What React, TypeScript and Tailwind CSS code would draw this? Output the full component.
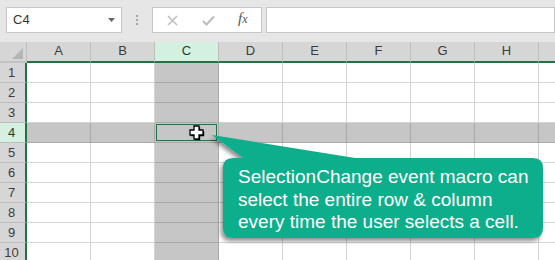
import React from "react";

const COLS = ["A", "B", "C", "D", "E", "F", "G", "H"];
const ROWS = [1, 2, 3, 4, 5, 6, 7, 8, 9, 10];

function Cell({ col, row }: { col: number; row: number }) {
  const selCol = col === 2;
  const selRow = row === 4;
  const active = selCol && selRow;
  if (active) {
    return (
      <div className="w-[64px] h-full shrink-0 border-r border-b border-[#a9a9a9] bg-[#c6c6c6] p-px">
        <div className="w-full h-full border border-[#217346]" />
      </div>
    );
  }
  if (selCol || selRow) {
    return <div className="w-[64px] h-full shrink-0 border-r border-b border-[#a9a9a9] bg-[#c6c6c6]" />;
  }
  return <div className="w-[64px] h-full shrink-0 border-r border-b border-[#d4d4d4] bg-white" />;
}

export default function App() {
  return (
    <div className="relative w-[555px] h-[260px] overflow-hidden bg-white font-['Liberation_Sans',Arial,sans-serif]">
      {/* toolbar */}
      <div className="h-[42px] bg-[#e6e6e6] flex items-start pt-[7px] pl-[6px]">
        <div className="w-[116px] h-[26px] bg-white border border-[#c6c6c6] flex items-center justify-between pl-[6px] pr-[6px] text-[13px] text-[#333]">
          <span>C4</span>
          <svg width="7" height="4" viewBox="0 0 7 4">
            <path d="M0 0 L7 0 L3.5 4 Z" fill="#666" />
          </svg>
        </div>
        <div className="w-[30px] h-[26px] flex flex-col items-center justify-center gap-[2px]">
          <div className="w-[2px] h-[2px] bg-[#a8a8a8]" />
          <div className="w-[2px] h-[2px] bg-[#a8a8a8]" />
          <div className="w-[2px] h-[2px] bg-[#a8a8a8]" />
        </div>
        <div className="w-[110px] h-[26px] bg-white border border-[#c6c6c6] flex items-center pl-[14px]">
          <svg width="11" height="11" viewBox="0 0 11 11">
            <path d="M1 1 L10 10 M10 1 L1 10" stroke="#bcbcbc" strokeWidth="1.5" fill="none" />
          </svg>
          <svg width="13" height="11" viewBox="0 0 13 11" className="ml-[24px]">
            <path d="M1 6 L4.5 9.5 L12 1.5" stroke="#bcbcbc" strokeWidth="2" fill="none" />
          </svg>
          <span className="ml-[23px] text-[15px] leading-none italic text-[#555] font-['Liberation_Serif',serif] -mt-[3px]">
            f<span className="text-[12px]">x</span>
          </span>
        </div>
        <div className="ml-[4px] w-[289px] h-[26px] bg-white border border-[#c6c6c6]" />
      </div>

      {/* column headers */}
      <div className="flex h-[21px] bg-[#d6d6d6]">
        <div className="w-[27px] h-full shrink-0 relative border-r border-[#bdbdbd] border-b-2 border-b-[#c2c2c2]">
          <svg width="11" height="11" viewBox="0 0 11 11" className="absolute right-[3px] bottom-[2px]">
            <path d="M11 0 L11 11 L0 11 Z" fill="#b5b5b5" />
          </svg>
        </div>
        {COLS.map((c, i) => (
          <div
            key={c}
            className={
              "w-[64px] h-full shrink-0 flex items-center justify-center border-r border-[#bdbdbd] border-b-2 border-b-[#217346] text-[13px] pb-px " +
              (i === 2 ? "bg-[#d3f0e0] text-[#1f3f2f]" : "text-[#3c3c3c]")
            }
          >
            {c}
          </div>
        ))}
        <div className="flex-1 h-full border-b-2 border-b-[#217346]" />
      </div>

      {/* rows */}
      {ROWS.map((r) => (
        <div key={r} className="flex h-[20px]">
          <div
            className={
              "w-[27px] h-full shrink-0 flex items-center justify-center border-r-2 border-r-[#217346] border-b border-b-[#bdbdbd] text-[13px] pr-[2px] " +
              (r === 4 ? "bg-[#d3f0e0] text-[#1f3f2f]" : "bg-[#d6d6d6] text-[#3c3c3c]")
            }
          >
            {r}
          </div>
          {COLS.map((c, i) => (
            <Cell key={c} col={i} row={r} />
          ))}
          <div
            className={
              "flex-1 h-full border-b " +
              (r === 4 ? "bg-[#c6c6c6] border-[#a9a9a9]" : "bg-white border-[#d4d4d4]")
            }
          />
        </div>
      ))}

      {/* cursor */}
      <svg width="18" height="18" viewBox="0 0 18 18" className="absolute left-[188px] top-[124px]">
        <path
          d="M6 2 H11 V6 H15 V11 H11 V15 H6 V11 H2 V6 H6 Z"
          transform="translate(1.2 1.2)"
          fill="#000"
        />
        <path
          d="M6 2 H11 V6 H15 V11 H11 V15 H6 V11 H2 V6 H6 Z"
          fill="#fff"
          stroke="#000"
          strokeWidth="1.3"
        />
      </svg>

      {/* callout */}
      <svg width="555" height="260" viewBox="0 0 555 260" className="absolute left-0 top-0 pointer-events-none">
        <defs>
          <filter id="sh" x="-10%" y="-10%" width="120%" height="130%">
            <feDropShadow dx="-2" dy="3" stdDeviation="2" floodColor="#000" floodOpacity="0.45" />
          </filter>
        </defs>
        <path
          d="M233 158 L243 158 L212 135 L355 158 L533 158 Q543 158 543 168 L543 228 Q543 238 533 238 L233 238 Q223 238 223 228 L223 168 Q223 158 233 158 Z"
          fill="#0fae8b"
          filter="url(#sh)"
        />
      </svg>
      <div className="absolute left-[223px] top-[158px] w-[320px] h-[80px] pl-[15px] pt-[8px] text-white text-[19px] leading-[22.5px] font-['Liberation_Sans',Arial,sans-serif]">
        <div>SelectionChange event macro can</div>
        <div>select the entire row &amp; column</div>
        <div>every time the user selects a cell.</div>
      </div>
    </div>
  );
}
